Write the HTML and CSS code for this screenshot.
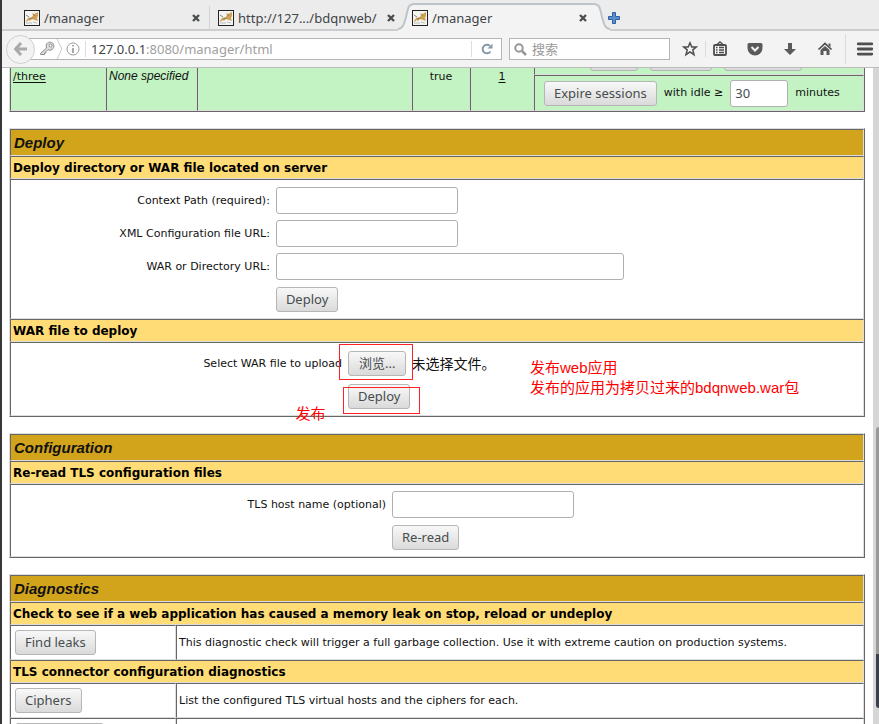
FILE: index.html
```html
<!DOCTYPE html>
<html lang="zh-CN">
<head>
<meta charset="utf-8">
<title>/manager</title>
<link rel="stylesheet" href="styles.css">
</head>
<body>
<svg class="defs" aria-hidden="true">
  <symbol id="tomcat" viewBox="0 0 16 16">
    <rect x="0.5" y="0.5" width="15" height="15" fill="#f4f4f2" stroke="#222"/>
    <path d="M2 11L4 8L8 7L9 5L8 3L10 4L12 3L14 2V6L13 8L14 11L11 10L8 9L6 11L5 10L2 12Z" fill="#d3a251"/>
    <path d="M2 5L5 7M9 4L11 6M5 9L9 8" fill="none" stroke="#8d8476"/>
    <path d="M2 13H8M9 12L13 13" fill="none" stroke="#bbb"/>
  </symbol>
  <symbol id="close" viewBox="0 0 10 10">
    <path d="M2 2L8 8M8 2L2 8" fill="none" stroke="#4a4e50" stroke-width="2.4"/>
  </symbol>
</svg>

<div class="window">
  <header class="chrome">
    <nav class="tabs">
      <div class="tab tab-first">
        <svg class="favicon"><use href="#tomcat"/></svg><span class="tab-name">/manager</span>
        <button class="close" aria-label="Close tab"><svg><use href="#close"/></svg></button>
      </div>
      <div class="tab tab-second">
        <svg class="favicon"><use href="#tomcat"/></svg><span class="tab-name">http://127.../bdqnweb/</span>
        <button class="close" aria-label="Close tab"><svg><use href="#close"/></svg></button>
      </div>
      <div class="tab-active">
        <svg class="curve" viewBox="0 0 16 28"><path d="M0 28V26C5 26 6 21 8 14C10 6 10 1 16 1V28Z" fill="#f3f3f3"/><path d="M0 26C5 26 6 21 8 14C10 6 10 1 16 1" fill="none" stroke="#bdc5cb" stroke-width="2"/></svg>
        <div class="tab-face">
          <svg class="favicon"><use href="#tomcat"/></svg><span class="tab-name">/manager</span>
          <button class="close" aria-label="Close tab"><svg><use href="#close"/></svg></button>
        </div>
        <svg class="curve" viewBox="0 0 16 28"><path d="M16 28V26C11 26 10 21 8 14C6 6 6 1 0 1V28Z" fill="#f3f3f3"/><path d="M16 26C11 26 10 21 8 14C6 6 6 1 0 1" fill="none" stroke="#bdc5cb" stroke-width="2"/></svg>
      </div>
      <button class="new-tab" aria-label="New tab"><svg viewBox="0 0 12 12"><path d="M4.5 .5h3v4h4v3h-4v4h-3v-4h-4v-3h4z" fill="#5b8fcf" stroke="#2f5f9f"/></svg></button>
    </nav>
    <div class="toolbar">
      <button class="back" aria-label="Back"><svg viewBox="0 0 14 14"><path d="M7 1L1.500 7L7 13M2 7H13" fill="none" stroke="#a9a9a9" stroke-width="3"/></svg></button>
      <div class="address">
        <svg class="key" viewBox="0 0 16 16"><path d="M1.500 12.500L7.500 7C6 2 10 .5 12.500 1.500C16 3 15.500 8 12 9C10.500 9.500 9.500 9 9 8.500L7 10.500V12H5.500V13.500H1.500Z" fill="#ddd" stroke="#8c8c8c"/><circle cx="11.500" cy="4.500" r="1.500" fill="#fff" stroke="#8c8c8c"/></svg>
        <svg class="chevron" viewBox="0 0 7 21"><path d="M1 0L6 10.500L1 21" fill="none" stroke="#c9c9c9"/></svg>
        <svg class="info" viewBox="0 0 14 14"><circle cx="7" cy="7" r="6" fill="none" stroke="#9b9b9b"/><path d="M7 6V11M7 3V4.500" stroke="#8c8c8c" stroke-width="1.500"/></svg>
        <div class="url"><strong>127.0.0.1</strong>:8080/manager/html</div>
        <button class="reload" aria-label="Reload"><svg viewBox="0 0 12 12"><path d="M9.500 8.500A4.300 4.300 0 1 1 8.800 2.800" fill="none" stroke="#8798a8" stroke-width="2"/><path d="M11.500 .5V5.500H6.500Z" fill="#8798a8"/></svg></button>
      </div>
      <label class="search">
        <svg viewBox="0 0 13 13"><circle cx="5" cy="5" r="3.700" fill="none" stroke="#979797" stroke-width="2"/><path d="M8 8L12 12" stroke="#979797" stroke-width="2.500"/></svg>
        <input type="search" placeholder="搜索" aria-label="搜索">
      </label>
      <div class="actions">
        <button class="star" aria-label="Bookmark"><svg viewBox="0 0 16 16"><path d="M8 1.800L9.800 6H14.300L10.800 8.900L12 13.700L8 11L4 13.700L5.200 8.900L1.700 6H6.200Z" fill="none" stroke="#4f4f4f" stroke-width="1.500"/></svg></button>
        <button class="library" aria-label="Library"><svg viewBox="0 0 16 16"><path d="M5 3.500L8 1L11 3.500" fill="none" stroke="#4f4f4f" stroke-width="1.500"/><rect x="2" y="4" width="12" height="10" rx="1" fill="#f3f3f3" stroke="#4f4f4f" stroke-width="1.800"/><path d="M4 6.500H5.500M7 6.500H12M4 9H5.500M7 9H12M4 11.500H5.500M7 11.500H12" stroke="#4f4f4f" stroke-width="1.300"/></svg></button>
        <button aria-label="Pocket"><svg viewBox="0 0 16 16"><path d="M2 2H14Q15.500 2 15.500 3.500V7A7.500 7.500 0 0 1 .5 7V3.500Q.5 2 2 2Z" fill="#5a5a5a"/><path d="M4.500 6L8 9.500L11.500 6" fill="none" stroke="#f3f3f3" stroke-width="2"/></svg></button>
        <button aria-label="Downloads"><svg viewBox="0 0 16 16"><path d="M6 2H10V8H14L8 14L2 8H6Z" fill="#5a5a5a"/></svg></button>
        <button aria-label="Home"><svg viewBox="0 0 16 16"><path d="M1.500 8.500L8 2.500L14.500 8.500" fill="none" stroke="#4f4f4f" stroke-width="1.700"/><path d="M11.500 2.500H13.500V6L11.500 4.500ZM3.500 9L8 5L12.500 9V14H9.500V10H6.500V14H3.500Z" fill="#5a5a5a"/></svg></button>
        <button class="menu" aria-label="Menu"><svg viewBox="0 0 16 16"><path d="M2 3.500H14M2 8H14M2 12.500H14" stroke="#4f4f4f" stroke-width="2.500" stroke-linecap="round"/></svg></button>
      </div>
    </div>
  </header>

  <div class="viewport">
    <main class="page">
      <table class="panel apps">
        <colgroup><col class="c-path"><col class="c-version"><col class="c-display"><col class="c-running"><col class="c-sessions"><col></colgroup>
        <tr>
          <td rowspan="2"><a href="#three">/three</a></td>
          <td rowspan="2"><i>None specified</i></td>
          <td rowspan="2"></td>
          <td rowspan="2" class="center">true</td>
          <td rowspan="2" class="center"><a href="#sessions">1</a></td>
          <td class="commands"><span>Start</span><button class="btn">Stop</button><button class="btn">Reload</button><button class="btn">Undeploy</button></td>
        </tr>
        <tr>
          <td><form class="expire"><button type="button" class="btn">Expire sessions</button><label for="idle">with idle ≥</label><input class="field" id="idle" value="30"><span>minutes</span></form></td>
        </tr>
      </table>

      <table class="panel">
        <tr><th class="title">Deploy</th></tr>
        <tr><th class="sub">Deploy directory or WAR file located on server</th></tr>
        <tr><td>
          <form class="form form-deploy">
            <label for="ctx">Context Path (required):</label><input class="field" id="ctx">
            <label for="xml">XML Configuration file URL:</label><input class="field" id="xml">
            <label for="war">WAR or Directory URL:</label><input class="field field-wide" id="war">
            <button type="button" class="btn">Deploy</button>
          </form>
        </td></tr>
        <tr><th class="sub">WAR file to deploy</th></tr>
        <tr><td>
          <form class="form form-upload">
            <label for="file">Select WAR file to upload</label>
            <div class="picker"><input type="file" id="file"><label for="file" class="btn mark-frame">浏览...</label><span>未选择文件。</span></div>
            <div class="submit"><button type="button" class="btn">Deploy</button><span class="mark mark-publish">发布</span></div>
          </form>
          <p class="mark mark-note">发布web应用<br>发布的应用为拷贝过来的bdqnweb.war包</p>
        </td></tr>
      </table>

      <table class="panel">
        <tr><th class="title">Configuration</th></tr>
        <tr><th class="sub">Re-read TLS configuration files</th></tr>
        <tr><td>
          <form class="form form-tls">
            <label for="tls">TLS host name (optional)</label><input class="field" id="tls">
            <button type="button" class="btn">Re-read</button>
          </form>
        </td></tr>
      </table>

      <table class="panel diagnostics">
        <colgroup><col class="c-action"><col></colgroup>
        <tr><th class="title" colspan="2">Diagnostics</th></tr>
        <tr><th class="sub" colspan="2">Check to see if a web application has caused a memory leak on stop, reload or undeploy</th></tr>
        <tr class="check"><td><button class="btn">Find leaks</button></td><td>This diagnostic check will trigger a full garbage collection. Use it with extreme caution on production systems.</td></tr>
        <tr><th class="sub" colspan="2">TLS connector configuration diagnostics</th></tr>
        <tr class="check"><td><button class="btn">Ciphers</button></td><td>List the configured TLS virtual hosts and the ciphers for each.</td></tr>
        <tr class="check"><td><button class="btn">Certificates</button></td><td></td></tr>
      </table>
    </main>
    <div class="scrollbar"><div class="thumb"></div></div>
  </div>
</div>
</body>
</html>
```
FILE: styles.css
```css
* { box-sizing: border-box; }
body {
  margin: 0;
  font: 11px/16px "DejaVu Sans", "Noto Sans CJK SC", sans-serif;
  color: #111;
  background: #fff;
}
button { font: inherit; color: inherit; padding: 0; border: 0; background: none; }
svg { display: block; flex: none; }
.defs { position: absolute; width: 0; height: 0; }

.window {
  display: flex;
  flex-direction: column;
  height: 100vh;
  overflow: hidden;
  border-left: 2px solid #37383a;
}

/* Tab strip */
.chrome {
  flex: none;
  color: #3f4447;
  background: #f3f3f3;
  border-bottom: 1px solid #bcbcbc;
  font-family: "Noto Sans", "Noto Sans CJK SC", sans-serif;
}
.tabs {
  display: flex;
  align-items: flex-end;
  height: 31px;
  background: #ececec;
  box-shadow: inset 0 -2px #cbcdce;
  font-size: 13px;
}
.tab { display: flex; align-items: center; height: 24px; margin-bottom: 1px; padding-left: 22px; padding-right: 8px; }
.tab-first { width: 208px; border-right: 1px solid #d4d4d4; }
.tab-second { width: 188px; padding-left: 8px; padding-right: 2px; }
.favicon { width: 16px; height: 16px; margin-right: 4px; }
.tab-name { flex: 1; white-space: nowrap; }
.close svg { width: 10px; height: 10px; }
.tab-active { display: flex; height: 28px; }
.curve { width: 16px; height: 28px; }
.tab-face {
  display: flex;
  align-items: center;
  width: 180px;
  padding-right: 6px;
  border-top: 2px solid #bdc5cb;
  background: #f3f3f3;
}
.tab-face .favicon { margin-left: -2px; }
.new-tab { margin: 0 0 7px -2px; }
.new-tab svg { width: 12px; height: 12px; }

/* Navigation toolbar */
.toolbar { display: flex; align-items: center; height: 36px; padding-left: 4px; }
.back {
  display: flex;
  align-items: center;
  justify-content: center;
  width: 29px;
  height: 29px;
  border: 1px solid #d0d0d0;
  border-radius: 50%;
  background: #f3f3f3;
  z-index: 1;
}
.back svg { width: 14px; height: 14px; }
.address {
  display: flex;
  flex: 1;
  align-items: center;
  height: 22px;
  margin-left: -6px;
  padding-left: 9px;
  border: 1px solid #b5b5b5;
  background: #fff;
}
.key { width: 16px; height: 16px; }
.chevron { width: 7px; height: 20px; margin: 0 3px 0 1px; }
.info { width: 14px; height: 14px; }
.url { flex: 1; margin-left: 5px; padding-left: 5px; border-left: 1px solid #ddd; font-size: 13px; color: #a0a0a0; }
.url strong { font-weight: 400; color: #3f4447; }
.reload { display: flex; align-items: center; justify-content: center; width: 30px; height: 16px; border-left: 1px solid #ddd; }
.reload svg { width: 12px; height: 12px; }
.search {
  display: flex;
  align-items: center;
  width: 161px;
  height: 22px;
  margin-left: 7px;
  padding-left: 4px;
  border: 1px solid #b5b5b5;
  background: #fff;
}
.search svg { width: 13px; height: 13px; margin-right: 5px; }
.search input { flex: 1; min-width: 0; padding: 0; border: 0; outline: 0; font: 13px/18px "Noto Sans", "Noto Sans CJK SC", sans-serif; }
.search input::placeholder { color: #999; }
.actions { display: flex; align-items: center; gap: 19px; padding-left: 12px; padding-right: 5px; }
.actions svg { width: 16px; height: 16px; }
.star { margin-right: -12px; }
.library { padding-left: 6px; border-left: 1px solid #dcdcdc; }
.menu { padding: 6px 0 6px 10px; margin-left: -7px; border-left: 1px solid #dcdcdc; }
.menu svg { width: 18px; height: 18px; }

/* Page, scrolled part way through the application list */
.viewport { display: flex; flex: 1; min-height: 0; overflow: hidden; }
.page { flex: 1; min-width: 0; margin-top: -27px; padding: 0 8px 0 7px; }
.scrollbar { flex: none; width: 6px; padding-top: 359px; padding-left: 3px; background: #d6d6d6; }
.thumb { height: 281px; border-radius: 3px 0 0 3px; background: #999; border-bottom: 54px solid #3b414b; }

.panel {
  width: 100%;
  margin-bottom: 16px;
  border: 1px solid;
  border-color: #ddd #666 #666 #ddd;
  border-spacing: 0;
  table-layout: fixed;
}
.panel td, .panel th {
  position: relative;
  padding: 0 2px;
  border: 1px solid;
  border-color: #666 #ddd #ddd #666;
  text-align: left;
}
.panel .title { height: 27px; padding-left: 3px; background: #d2a41c; font: italic bold 15px/24px "Liberation Sans", sans-serif; }
.panel .sub { height: 23px; background: #ffdc75; font-size: 12px; line-height: 20px; color: #000; }

.btn {
  display: inline-block;
  height: 25px;
  padding: 0 9px;
  border: 1px solid #b6b6b6;
  border-radius: 3px;
  background: linear-gradient(#f8f8f8, #dadada);
  color: #474c4e;
  font-family: "Noto Sans", "Noto Sans CJK SC", sans-serif;
  font-size: 13px;
  line-height: 23px;
  white-space: nowrap;
}
.field {
  width: 182px;
  height: 27px;
  padding: 0 4px;
  border: 1px solid #b0b0b0;
  border-radius: 3px;
  background: #fff;
  font: 13px/20px "Noto Sans", sans-serif;
  color: #474c4e;
}
.field-wide { width: 348px; }

/* Applications */
.apps { background: #c3f3c3; }
.c-path { width: 96px; }
.c-version { width: 91px; }
.c-display { width: 215px; }
.c-running { width: 58px; }
.c-sessions { width: 64px; }
.apps a { color: #111; text-underline-offset: 2px; }
.apps i { font: italic 12px/16px "Liberation Sans", sans-serif; }
.apps .center { text-align: center; }
.apps .commands { height: 33px; padding-left: 16px; }
.commands .btn { margin-left: 12px; }
.expire { display: flex; align-items: center; height: 34px; padding-left: 7px; gap: 7px; }
.expire .field { width: 58px; }

/* Forms */
.form { display: grid; grid-auto-rows: 33px; align-items: center; justify-items: start; padding: 4px 0 2px; }
.form > label { justify-self: end; margin-right: 6px; }
.form > .btn, .submit { grid-column: 2; }
.form-deploy { grid-template-columns: 31% 1fr; }
.form-upload { grid-template-columns: 335px 1fr; }
.form-tls { grid-template-columns: 379px 1fr; padding: 3px 0 2px; }
.picker { display: flex; align-items: center; gap: 5px; font-size: 14px; }
.picker input { position: absolute; width: 1px; height: 1px; opacity: 0; }
.picker .btn { position: relative; padding: 0 10px; }
.submit { position: relative; }

/* Red review marks laid over the page */
.mark { position: absolute; margin: 0; color: #f00; font: 15px/20px "Liberation Sans", "Noto Sans CJK SC", sans-serif; white-space: nowrap; }
.mark-frame::after, .submit::after { content: ""; position: absolute; z-index: 1; border: 1px solid #f22; }
.mark-frame::after { inset: -8px -8px -5px -10px; }
.submit::after { inset: 3px -10px -5px -5px; }
.mark-publish { right: 85px; top: 20px; }
.mark-note { left: 519px; top: 15px; }

/* Diagnostics */
.c-action { width: 166px; }
.check td { height: 35px; }
.check td:first-child { padding-left: 4px; }
```
